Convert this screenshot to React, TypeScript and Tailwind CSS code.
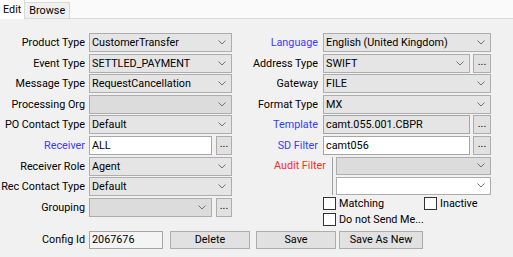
import React from "react";

const Chevron = () => (
  <svg width="8" height="5" viewBox="0 0 8 5" className="shrink-0">
    <path d="M0.5 0.5 L4 4 L7.5 0.5" fill="none" stroke="#707070" strokeWidth="1" />
  </svg>
);

function Combo({ value, className, bg = "bg-[#e5e5e5]" }: { value?: string; className: string; bg?: string }) {
  return (
    <div className={`flex items-center justify-between border border-[#adadad] pl-[2px] pr-[5px] ${bg} ${className}`}>
      <span className="whitespace-nowrap leading-[13px]">{value}</span>
      <Chevron />
    </div>
  );
}

function Field({ value, className, bg }: { value?: string; className: string; bg: string }) {
  return (
    <div className={`flex items-center border border-[#a6a6a6] pl-[2px] ${bg} ${className}`}>
      <span className="whitespace-nowrap leading-[13px]">{value}</span>
    </div>
  );
}

function Dots({ className }: { className: string }) {
  return (
    <div className={`flex items-center justify-center border border-[#adadad] bg-[#e1e1e1] pb-[3px] leading-[13px] ${className}`}>
      ...
    </div>
  );
}

function LeftLabel({ text, color = "text-black" }: { text: string; color?: string }) {
  return <div className={`w-[89px] shrink-0 whitespace-nowrap pr-[4px] text-right leading-[13px] ${color}`}>{text}</div>;
}

function RightLabel({ text, color = "text-black" }: { text: string; color?: string }) {
  return <div className={`w-[87px] shrink-0 whitespace-nowrap pr-[5px] text-right leading-[13px] ${color}`}>{text}</div>;
}

function Check({ label, className }: { label: string; className?: string }) {
  return (
    <div className={`flex items-center ${className ?? ""}`}>
      <div className="h-[13px] w-[13px] shrink-0 border border-[#333333] bg-white" />
      <span className="ml-[3px] whitespace-nowrap leading-[13px]">{label}</span>
    </div>
  );
}

function Btn({ label, className }: { label: string; className: string }) {
  return (
    <div className={`flex h-[18px] items-center justify-center whitespace-nowrap border border-[#adadad] bg-[#e1e1e1] leading-[13px] ${className}`}>
      {label}
    </div>
  );
}

export default function App() {
  const blue = "text-[#3b3bff]";
  return (
    <div className="h-[257px] w-[513px] overflow-hidden bg-[#fafafa] font-['Roboto',sans-serif] text-[10.8px] text-black">
      <div className="flex h-[19px] items-start border-b border-[#d9d9d9]">
        <div className="relative z-10 flex h-[19px] items-center border-r border-[#d9d9d9] bg-white px-[3px] leading-[13px]">Edit</div>
        <div className="mt-[2px] flex h-[16px] items-center border-r border-t border-[#d9d9d9] bg-[#f0f0f0] px-[4px] leading-[13px]">Browse</div>
      </div>
      <div className="h-[238px] bg-[#f1f1f1] pt-[14px]">
        <div className="flex">
          <div className="flex w-[236px] shrink-0 flex-col gap-[1.6px]">
            <div className="flex h-[19px] items-center">
              <LeftLabel text="Product Type" />
              <Combo value="CustomerTransfer" className="h-[19px] w-[143px]" />
            </div>
            <div className="flex h-[19px] items-center">
              <LeftLabel text="Event Type" />
              <Combo value="SETTLED_PAYMENT" className="h-[19px] w-[143px]" />
            </div>
            <div className="flex h-[19px] items-center">
              <LeftLabel text="Message Type" />
              <Combo value="RequestCancellation" className="h-[19px] w-[143px]" />
            </div>
            <div className="flex h-[19px] items-center">
              <LeftLabel text="Processing Org" />
              <Combo className="h-[19px] w-[143px]" bg="bg-[#dcdcdc]" />
            </div>
            <div className="flex h-[19px] items-center">
              <LeftLabel text="PO Contact Type" />
              <Combo value="Default" className="h-[19px] w-[143px]" />
            </div>
            <div className="flex h-[19px] items-center">
              <LeftLabel text="Receiver" color={blue} />
              <Field value="ALL" className="h-[19px] w-[123px]" bg="bg-white" />
              <Dots className="ml-[4px] h-[19px] w-[16px]" />
            </div>
            <div className="flex h-[19px] items-center">
              <LeftLabel text="Receiver Role" />
              <Combo value="Agent" className="h-[19px] w-[143px]" />
            </div>
            <div className="flex h-[19px] items-center">
              <LeftLabel text="Rec Contact Type" />
              <Combo value="Default" className="h-[19px] w-[143px]" />
            </div>
            <div className="flex h-[19px] items-center">
              <LeftLabel text="Grouping" />
              <Combo className="h-[19px] w-[123px]" bg="bg-[#dcdcdc]" />
              <Dots className="ml-[4px] h-[19px] w-[16px]" />
            </div>
          </div>

          <div className="flex flex-col">
            <div className="flex flex-col gap-[1.6px]">
              <div className="flex h-[19px] items-center">
                <RightLabel text="Language" color={blue} />
                <Combo value="English (United Kingdom)" className="h-[19px] w-[168px]" />
              </div>
              <div className="flex h-[19px] items-center">
                <RightLabel text="Address Type" />
                <Combo value="SWIFT" className="h-[19px] w-[147px]" />
                <Dots className="ml-[3px] h-[19px] w-[18px]" />
              </div>
              <div className="flex h-[19px] items-center">
                <RightLabel text="Gateway" />
                <Combo value="FILE" className="h-[19px] w-[168px]" />
              </div>
              <div className="flex h-[19px] items-center">
                <RightLabel text="Format Type" />
                <Combo value="MX" className="h-[19px] w-[168px]" />
              </div>
              <div className="flex h-[19px] items-center">
                <RightLabel text="Template" color={blue} />
                <Field value="camt.055.001.CBPR" className="h-[19px] w-[147px]" bg="bg-[#e5e5e5]" />
                <Dots className="ml-[3px] h-[19px] w-[18px]" />
              </div>
              <div className="flex h-[19px] items-center">
                <RightLabel text="SD Filter" color={blue} />
                <Field value="camt056" className="h-[19px] w-[147px]" bg="bg-white" />
                <Dots className="ml-[3px] h-[19px] w-[18px]" />
              </div>
            </div>
            <div className="mt-[2px] flex">
              <div className="flex h-[18px] w-[92px] shrink-0 items-center justify-end whitespace-nowrap pr-[2px] leading-[13px] text-[#ff2b2b]">Audit Filter</div>
              <div className="ml-[4px] w-px bg-[#a0a0a0]" />
              <div className="ml-[3px] flex flex-col gap-[2px]">
                <Combo className="h-[18px] w-[155px]" bg="bg-[#dcdcdc]" />
                <Combo className="h-[18px] w-[155px]" bg="bg-white" />
              </div>
            </div>
            <div className="mt-[2px] flex h-[13px] pl-[87px]">
              <Check label="Matching" className="w-[101px]" />
              <Check label="Inactive" />
            </div>
            <div className="mt-[3px] flex h-[13px] pl-[87px]">
              <Check label="Do not Send Me..." />
            </div>
          </div>
        </div>

        <div className="mt-[5px] flex items-center">
          <LeftLabel text="Config Id" />
          <Field value="2067676" className="h-[18px] w-[74px]" bg="bg-[#f4f4f4]" />
          <Btn label="Delete" className="ml-[7px] w-[80px]" />
          <Btn label="Save" className="ml-[6px] w-[80px]" />
          <Btn label="Save As New" className="ml-[3px] w-[84px]" />
        </div>
      </div>
    </div>
  );
}
